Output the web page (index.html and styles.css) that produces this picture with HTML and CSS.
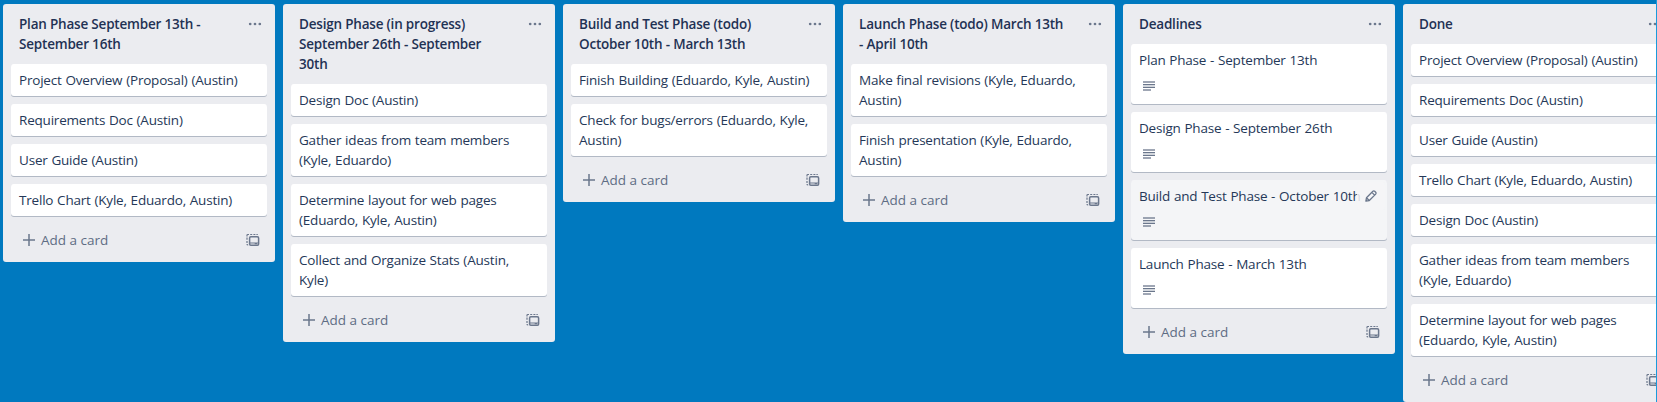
FILE: index.html
```html
<!DOCTYPE html>
<html lang="en">
<head>
<meta charset="utf-8">
<title>Project board</title>
<link rel="stylesheet" href="styles.css">
</head>
<body>
<svg class="sprite" aria-hidden="true">
  <symbol id="dots" viewBox="0 0 16 16"><circle cx="3.2" cy="8" r="1.35"/><circle cx="8" cy="8" r="1.35"/><circle cx="12.8" cy="8" r="1.35"/></symbol>
  <symbol id="plus" viewBox="0 0 16 16"><path d="M8 2v12M2 8h12" fill="none" stroke="currentColor" stroke-width="1.5"/></symbol>
  <symbol id="template" viewBox="0 0 16 16"><path d="M2 4.5V3.2Q2 2.5 2.8 2.5H4M5.2 2.5h2M8.4 2.5h2M11.4 2.5h1.4M2 5.6v2.2M2 9v2M2 12.1q0 .9 1.2.9" fill="none" stroke="currentColor" stroke-width="1.2"/><rect x="4.6" y="4.8" width="9" height="8.4" rx="1.2" fill="none" stroke="currentColor" stroke-width="1.5"/><path d="M4.5 10.4h9v1h-1.4v.8h-2.4v-.8H4.5z"/></symbol>
  <symbol id="lines" viewBox="0 0 16 16"><path d="M2 3h12v2H2zM2 11h8v2H2z" opacity=".65"/><path d="M2 6h12v1H2zM2 9h12v1H2z"/><path d="M2 7h12v2H2z" opacity=".3"/></symbol>
  <symbol id="pencil" viewBox="0 0 16 16"><path d="M2.9 13.1l.6-3.4 6.4-6.4q.9-.9 1.8 0l1 1q.9.9 0 1.8l-6.4 6.4zM8.9 4.4l2.7 2.7M3.5 9.8l2.7 2.7" fill="none" stroke="currentColor" stroke-width="1.3" stroke-linejoin="round"/></symbol>
</svg>
<main class="board">
  <section class="list">
    <header class="list-header"><h2>Plan Phase September 13th -<br>September 16th</h2><svg class="icon"><use href="#dots"/></svg></header>
    <div class="cards">
      <article class="card">Project Overview (Proposal) (Austin)</article>
      <article class="card">Requirements Doc (Austin)</article>
      <article class="card">User Guide (Austin)</article>
      <article class="card">Trello Chart (Kyle, Eduardo, Austin)</article>
    </div>
    <footer class="list-footer"><svg class="icon"><use href="#plus"/></svg><span>Add a card</span><svg class="icon template"><use href="#template"/></svg></footer>
  </section>
  <section class="list">
    <header class="list-header"><h2>Design Phase (in progress)<br>September 26th - September<br>30th</h2><svg class="icon"><use href="#dots"/></svg></header>
    <div class="cards">
      <article class="card">Design Doc (Austin)</article>
      <article class="card">Gather ideas from team members<br>(Kyle, Eduardo)</article>
      <article class="card">Determine layout for web pages<br>(Eduardo, Kyle, Austin)</article>
      <article class="card">Collect and Organize Stats (Austin,<br>Kyle)</article>
    </div>
    <footer class="list-footer"><svg class="icon"><use href="#plus"/></svg><span>Add a card</span><svg class="icon template"><use href="#template"/></svg></footer>
  </section>
  <section class="list">
    <header class="list-header"><h2>Build and Test Phase (todo)<br>October 10th - March 13th</h2><svg class="icon"><use href="#dots"/></svg></header>
    <div class="cards">
      <article class="card">Finish Building (Eduardo, Kyle, Austin)</article>
      <article class="card">Check for bugs/errors (Eduardo, Kyle,<br>Austin)</article>
    </div>
    <footer class="list-footer"><svg class="icon"><use href="#plus"/></svg><span>Add a card</span><svg class="icon template"><use href="#template"/></svg></footer>
  </section>
  <section class="list">
    <header class="list-header"><h2>Launch Phase (todo) March 13th<br>- April 10th</h2><svg class="icon"><use href="#dots"/></svg></header>
    <div class="cards">
      <article class="card">Make final revisions (Kyle, Eduardo,<br>Austin)</article>
      <article class="card">Finish presentation (Kyle, Eduardo,<br>Austin)</article>
    </div>
    <footer class="list-footer"><svg class="icon"><use href="#plus"/></svg><span>Add a card</span><svg class="icon template"><use href="#template"/></svg></footer>
  </section>
  <section class="list">
    <header class="list-header"><h2>Deadlines</h2><svg class="icon"><use href="#dots"/></svg></header>
    <div class="cards">
      <article class="card">Plan Phase - September 13th<div class="badges"><svg class="icon"><use href="#lines"/></svg></div></article>
      <article class="card">Design Phase - September 26th<div class="badges"><svg class="icon"><use href="#lines"/></svg></div></article>
      <article class="card hovered">Build and Test Phase - October 10th<span class="edit"><svg class="icon"><use href="#pencil"/></svg></span><div class="badges"><svg class="icon"><use href="#lines"/></svg></div></article>
      <article class="card">Launch Phase - March 13th<div class="badges"><svg class="icon"><use href="#lines"/></svg></div></article>
    </div>
    <footer class="list-footer"><svg class="icon"><use href="#plus"/></svg><span>Add a card</span><svg class="icon template"><use href="#template"/></svg></footer>
  </section>
  <section class="list">
    <header class="list-header"><h2>Done</h2><svg class="icon"><use href="#dots"/></svg></header>
    <div class="cards">
      <article class="card">Project Overview (Proposal) (Austin)</article>
      <article class="card">Requirements Doc (Austin)</article>
      <article class="card">User Guide (Austin)</article>
      <article class="card">Trello Chart (Kyle, Eduardo, Austin)</article>
      <article class="card">Design Doc (Austin)</article>
      <article class="card">Gather ideas from team members<br>(Kyle, Eduardo)</article>
      <article class="card">Determine layout for web pages<br>(Eduardo, Kyle, Austin)</article>
    </div>
    <footer class="list-footer"><svg class="icon"><use href="#plus"/></svg><span>Add a card</span><svg class="icon template"><use href="#template"/></svg></footer>
  </section>
</main>
</body>
</html>
```
FILE: styles.css
```css
* { box-sizing: border-box; }
body {
  margin: 0;
  overflow: hidden;
  background: #0079bf;
  color: #253858;
  font: 13.5px/20px "Segoe UI", "Open Sans", "Noto Sans", sans-serif;
}
.sprite { display: none; }
.board {
  display: flex;
  align-items: flex-start;
  gap: 8px;
  height: 402px;
  padding: 4px 0 0 3px;
  overflow: hidden;
  border-right: 1px solid #1a9bdc;
}
.list {
  flex: 0 0 272px;
  border-radius: 3px;
  background: #ebecf0;
}
.list-header {
  display: flex;
  justify-content: space-between;
  align-items: flex-start;
  padding: 10px 12px 10px 16px;
}
.list-header h2 {
  margin: 0;
  color: #1f3254;
  font-size: 13.5px;
  font-weight: 600;
  letter-spacing: -0.2px;
  white-space: nowrap;
}
.icon {
  flex: none;
  display: block;
  width: 16px;
  height: 16px;
  color: #6b778c;
  fill: currentColor;
}
.list-header .icon { margin-top: 2px; }
.cards {
  display: flex;
  flex-direction: column;
  gap: 8px;
  padding: 0 8px;
}
.card {
  position: relative;
  padding: 6px 8px;
  border-radius: 3px;
  background: #fff;
  box-shadow: 0 1px 0 rgba(9, 30, 66, .25);
  letter-spacing: -0.2px;
  word-spacing: 0.5px;
  white-space: nowrap;
}
.badges {
  height: 28px;
  padding: 8px 2px 0;
}
.hovered { background: #f4f5f7; }
.edit {
  position: absolute;
  top: 2px;
  right: 2px;
  display: grid;
  place-items: center;
  width: 28px;
  height: 28px;
  border-radius: 3px;
  background: rgba(244, 245, 247, .85);
}
.list-footer {
  display: flex;
  align-items: center;
  gap: 4px;
  height: 46px;
  padding: 2px 14px 0 18px;
  color: #5e6c84;
}
.list-footer .template { margin-left: auto; }
```
